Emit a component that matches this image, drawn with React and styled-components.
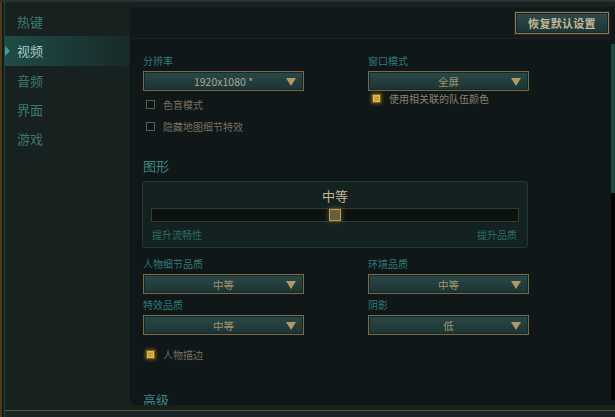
import React from "react";
import styled, { createGlobalStyle } from "styled-components";

const Global = createGlobalStyle`
  html, body { margin: 0; padding: 0; background: #17211f; }
  body { font-family: "Noto Sans CJK SC", "Noto Sans", sans-serif; }
  * { box-sizing: border-box; }
`;

const Frame = styled.div`
  width: 615px;
  height: 417px;
  display: flex;
  flex-direction: column;
  background: #17211f;
  border-top: 2px solid #2b322e;
  box-shadow: inset 2px 0 0 #4a3c1a, inset 4px 0 0 #131a18, inset 5px 0 0 #1d4542;
  overflow: hidden;
`;

const Body = styled.div`
  display: flex;
  height: 403px;
`;

const Sidebar = styled.nav`
  width: 130px;
  flex-shrink: 0;
  padding-top: 5px;
  display: flex;
  flex-direction: column;
`;

const NavItem = styled.div`
  position: relative;
  height: 29.3px;
  margin-left: 5px;
  padding-left: 12px;
  display: flex;
  align-items: center;
  font-size: 13px;
  color: ${(p) => (p.$active ? "#a6cbc3" : "#3a7a70")};
  background: ${(p) =>
    p.$active
      ? "linear-gradient(90deg, #1f4c48 0%, #1b3836 55%, #182a28 100%)"
      : "transparent"};
`;

const Marker = styled.span`
  position: absolute;
  left: 0;
  top: 50%;
  margin-top: -5px;
  width: 0;
  height: 0;
  border-top: 5px solid transparent;
  border-bottom: 5px solid transparent;
  border-left: 5px solid #3aa39c;
`;

const Panel = styled.main`
  flex: 1;
  margin-top: 5px;
  background: #0f1719;
  border-radius: 6px 0 0 6px;
  overflow: hidden;
  display: flex;
  flex-direction: column;
`;

const Header = styled.header`
  height: 32px;
  flex-shrink: 0;
  display: flex;
  justify-content: flex-end;
  align-items: flex-start;
  padding: 5px 2px 0 0;
  background: #111a1b;
  border-bottom: 1px solid #18221f;
`;

const ResetButton = styled.button`
  width: 94px;
  height: 22px;
  padding: 0;
  font-family: inherit;
  font-size: 11px;
  font-weight: 700;
  color: #c7b896;
  letter-spacing: 0.3px;
  background: linear-gradient(180deg, #2c4b4b 0%, #1d3534 100%);
  border: 1px solid #8d7b55;
  box-shadow: 0 0 0 1px #2a2418, inset 0 0 0 1px #162625;
`;

const Content = styled.div`
  padding: 16px 0 0 13px;
  display: flex;
  flex-direction: column;
`;

const Columns = styled.div`
  display: grid;
  grid-template-columns: 161px 161px;
  column-gap: 64px;
`;

const Col = styled.div`
  display: flex;
  flex-direction: column;
`;

const Label = styled.div`
  font-size: 10px;
  line-height: 12px;
  color: #2f7b76;
  margin-top: ${(p) => p.$mt || 0}px;
  margin-bottom: 4px;
`;

const Select = styled.div`
  position: relative;
  height: 20px;
  display: flex;
  align-items: center;
  justify-content: center;
  font-size: 10.5px;
  color: ${(p) => (p.$light ? "#aaa99a" : "#a0936f")};
  background: linear-gradient(180deg, #2a4848 0%, #1c3433 100%);
  border: 1px solid #7a6a48;
  box-shadow: inset 0 0 0 1px #142826;
`;

const Arrow = styled.span`
  position: absolute;
  right: 7px;
  top: 6px;
  width: 0;
  height: 0;
  border-left: 5px solid transparent;
  border-right: 5px solid transparent;
  border-top: 8px solid #b39866;
`;

const CheckRow = styled.div`
  display: flex;
  align-items: center;
  height: ${(p) => p.$h || 14}px;
  margin-top: ${(p) => p.$mt || 0}px;
  padding-left: ${(p) => p.$pl ?? 3}px;
  font-size: 10px;
  color: ${(p) => (p.$bright ? "#8b8370" : "#78705f")};
`;

const Box = styled.span`
  width: 9px;
  height: 9px;
  margin-right: 8px;
  flex-shrink: 0;
  ${(p) =>
    p.$on
      ? `background: #c9a23e; border: 1px solid #7a5a1a; box-shadow: 0 0 3px 1px rgba(200,150,40,0.45), inset 0 0 0 1px #e2bf5a;`
      : `background: #0d1415; border: 1px solid #5e5c50;`}
`;

const Heading = styled.h2`
  margin: ${(p) => p.$mt}px 0 0 0;
  font-size: 13px;
  line-height: 18px;
  font-weight: 400;
  color: #3a8780;
`;

const GraphicsBox = styled.section`
  width: 386px;
  margin: 6px 0 0 -1px;
  padding: 5px 8px 6px 8px;
  background: #132121;
  border: 1px solid #1f3a36;
  border-radius: 3px;
  display: flex;
  flex-direction: column;
`;

const Level = styled.div`
  text-align: center;
  font-size: 13px;
  line-height: 18px;
  color: #c5b68f;
`;

const Track = styled.div`
  position: relative;
  height: 14px;
  margin-top: 3px;
  background: #0b1212;
  border: 1px solid #3c3a26;
`;

const Thumb = styled.span`
  position: absolute;
  top: 0;
  width: 12px;
  height: 12px;
  background: #6b5c3a;
  border: 1px solid #b59d62;
  box-shadow: 0 0 4px 1px rgba(190, 160, 80, 0.35);
`;

const Ends = styled.div`
  display: flex;
  justify-content: space-between;
  margin-top: 7px;
  padding: 0 2px 0 1px;
  font-size: 10px;
  line-height: 12px;
  color: #2c6d67;
`;

const ScrollCol = styled.div`
  width: 4px;
  flex-shrink: 0;
  margin-top: 5px;
  display: flex;
  flex-direction: column;
  background: #0f1719;
`;

const ScrollGap = styled.div`
  height: 37px;
`;

const ScrollThumb = styled.div`
  height: 149px;
  background: #1b4a3e;
`;

const ScrollTrack = styled.div`
  flex: 1;
  background: #020303;
  margin-bottom: 5px;
`;

const Bottom = styled.footer`
  height: 12px;
  margin-left: 5px;
  background: #17221f;
  display: flex;
  flex-direction: column;
`;

const GoldLine = styled.div`
  margin-top: 5px;
  height: 1px;
  background: #5a5639;
`;

const BottomFill = styled.div`
  flex: 1;
  background: #172527;
`;

const nav = ["热键", "视频", "音频", "界面", "游戏"];

export default function App() {
  return (
    <>
      <Global />
      <Frame>
        <Body>
          <Sidebar>
            {nav.map((n, i) => (
              <NavItem key={n} $active={i === 1}>
                {i === 1 && <Marker />}
                {n}
              </NavItem>
            ))}
          </Sidebar>
          <Panel>
            <Header>
              <ResetButton>恢复默认设置</ResetButton>
            </Header>
            <Content>
              <Columns>
                <Col>
                  <Label>分辨率</Label>
                  <Select $light>
                    1920x1080 *
                    <Arrow />
                  </Select>
                  <CheckRow $mt={6}>
                    <Box />
                    色盲模式
                  </CheckRow>
                  <CheckRow $mt={8}>
                    <Box />
                    隐藏地图细节特效
                  </CheckRow>
                </Col>
                <Col>
                  <Label>窗口模式</Label>
                  <Select>
                    全屏
                    <Arrow />
                  </Select>
                  <CheckRow $mt={1} $h={12} $pl={4} $bright>
                    <Box $on />
                    使用相关联的队伍颜色
                  </CheckRow>
                </Col>
              </Columns>

              <Heading $mt={24}>图形</Heading>
              <GraphicsBox>
                <Level>中等</Level>
                <Track>
                  <Thumb style={{ left: 177 }} />
                </Track>
                <Ends>
                  <span>提升流畅性</span>
                  <span>提升品质</span>
                </Ends>
              </GraphicsBox>

              <Columns>
                <Col>
                  <Label $mt={10}>人物细节品质</Label>
                  <Select>
                    中等
                    <Arrow />
                  </Select>
                  <Label $mt={5}>特效品质</Label>
                  <Select>
                    中等
                    <Arrow />
                  </Select>
                </Col>
                <Col>
                  <Label $mt={10}>环境品质</Label>
                  <Select>
                    中等
                    <Arrow />
                  </Select>
                  <Label $mt={5}>阴影</Label>
                  <Select>
                    低
                    <Arrow />
                  </Select>
                </Col>
              </Columns>
              <CheckRow $mt={12}>
                <Box $on />
                人物描边
              </CheckRow>
              <Heading $mt={30}>高级</Heading>
            </Content>
          </Panel>
          <ScrollCol>
            <ScrollGap />
            <ScrollThumb />
            <ScrollTrack />
          </ScrollCol>
        </Body>
        <Bottom>
          <GoldLine />
          <BottomFill />
        </Bottom>
      </Frame>
    </>
  );
}
